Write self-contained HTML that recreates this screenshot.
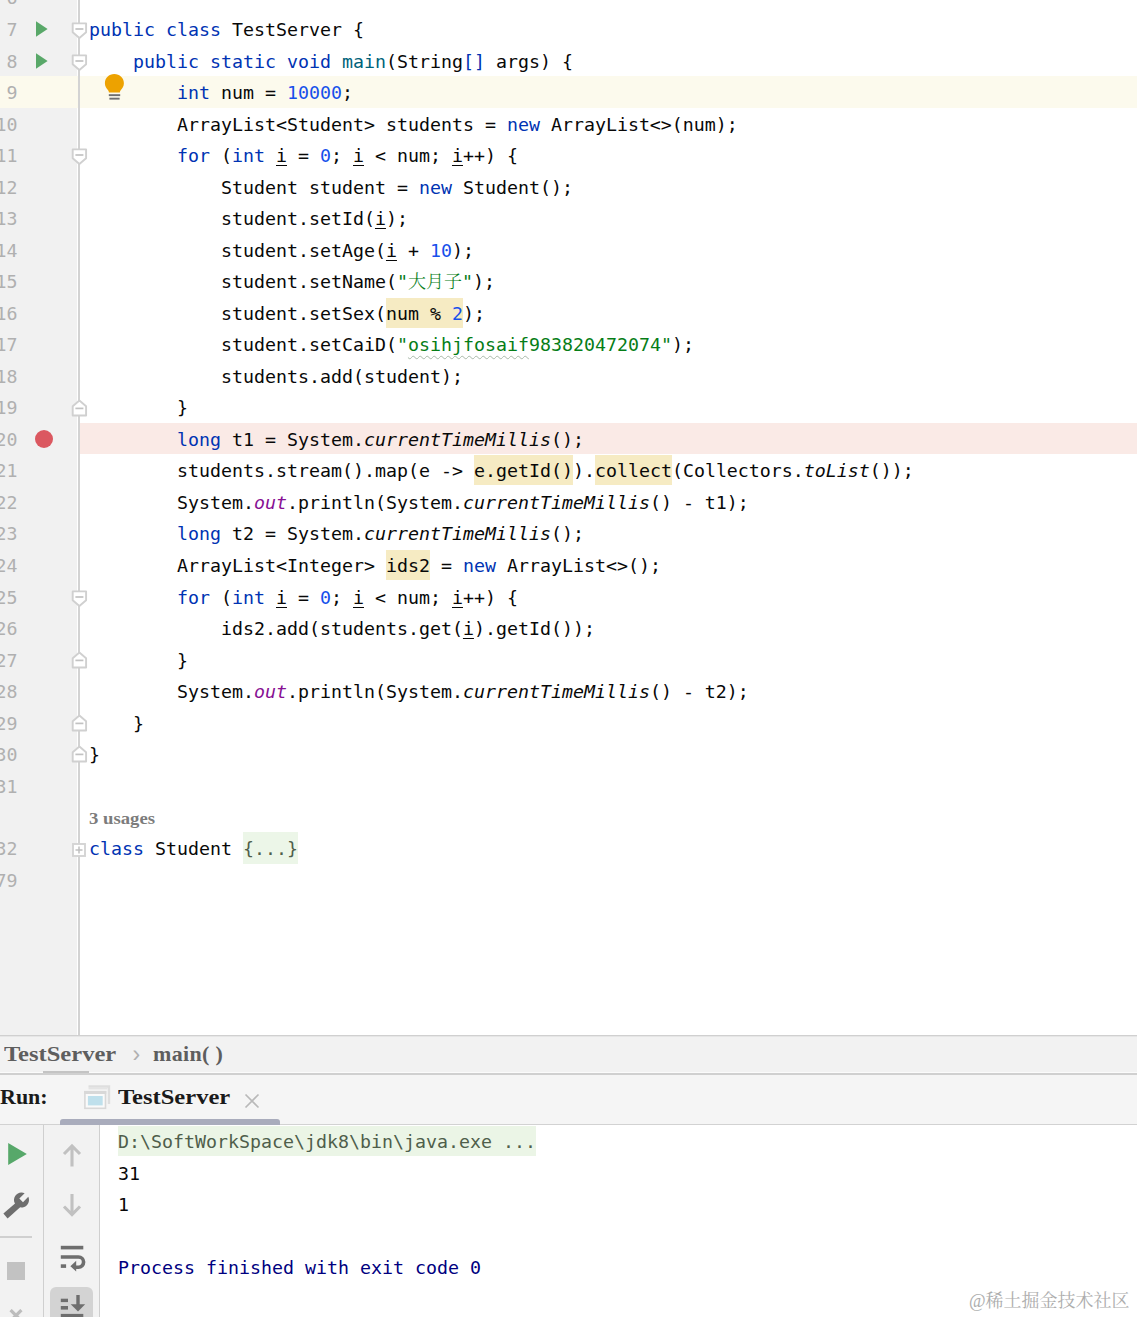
<!DOCTYPE html>
<html lang="en"><head><meta charset="utf-8"><title>TestServer</title>
<style>
*{box-sizing:border-box}
html,body{margin:0;padding:0}
body{width:1137px;height:1317px;overflow:hidden;background:#fff;position:relative;font-family:"DejaVu Sans Mono","Liberation Mono","Noto Sans CJK SC",monospace}
#ed{position:absolute;left:0;top:0;width:1137px;height:1035px;overflow:hidden;background:#fff}
#ed:before{content:"";position:absolute;left:0;top:0;width:77px;height:1035px;background:#f1f1f1}
.gline{position:absolute;left:78px;top:0;width:2px;height:1035px;background:#d3d3d3}
.cur{position:absolute;left:79px;width:1058px;height:32px;background:#fcfaed}
.curg{position:absolute;left:0;width:78px;height:32px;background:#fcfaed}
.bp{position:absolute;left:79.5px;width:1058px;height:30.5px;background:#faeae6}
.ln{position:absolute;left:-40.5px;width:58px;text-align:right;height:32px;line-height:32px;font-size:18.27px;color:#b0b0b0;white-space:pre}
.cl{position:absolute;height:32px;line-height:32px;font-size:18.27px;color:#080808;white-space:pre}
.k{color:#0033b3}
.n{color:#1750eb}
.s{color:#067d17}
.m{color:#00627a}
.f{color:#871094;font-style:italic}
.i{font-style:italic}
.u{text-decoration:underline;text-decoration-thickness:1px;text-underline-offset:3px}
.h{background:#f6ebc3;padding:4.6px 0 3.6px}
.w{text-decoration:underline wavy #a9b8a9;text-decoration-thickness:1px;text-underline-offset:4px}
.cj{font-family:"Noto Serif CJK SC","Noto Sans CJK SC",serif;font-size:18px;line-height:0;font-weight:300}
.fold{background:#ecf6e8;color:#4f5e4b;padding:5.6px 0 4.6px}
.usages{position:absolute;left:89px;top:809px;font-family:"Liberation Serif",serif;font-weight:bold;font-size:16px;color:#7c7c7c;line-height:20px;transform:scaleX(1.17);transform-origin:0 50%;white-space:pre}
.ic{position:absolute;display:block}
.bpdot{position:absolute;left:35px;width:18px;height:18px;border-radius:50%;background:#db5860}
/* bottom */
#bc{position:absolute;left:0;top:1035px;width:1137px;height:38px;background:#f2f2f2;border-top:1px solid #d0d0d0;border-bottom:1px solid #fbfbfb;box-shadow:inset 0 1px 0 #e6e6e6;font-family:"Liberation Serif",serif;font-weight:bold;font-size:22px;color:#5e5e5e}
#bc span{position:absolute;top:6px;line-height:24px;white-space:pre}
.sx{transform:scaleX(1.115);transform-origin:0 50%}
.bcu{position:absolute;left:43px;top:35px;width:46px;height:2px;background:#c4c4c4}
#run{position:absolute;left:0;top:1073px;width:1137px;height:52px;background:#f5f5f5;border-top:2px solid #d0d0d0;border-bottom:1px solid #d2d2d2;font-family:"Liberation Serif",serif;font-weight:bold;font-size:22px;color:#1a1a1a}
#run span{position:absolute;line-height:24px;white-space:pre}
#tabline{position:absolute;left:60px;top:1119px;width:220px;height:5.5px;background:#a9acbc;border-radius:3px 3px 0 0}
#con{position:absolute;left:0;top:1125px;width:1137px;height:192px;background:#fff;overflow:hidden}
.tb1{position:absolute;left:0;top:0;width:44px;height:192px;background:#f2f2f2;border-right:1.5px solid #cfcfcf}
.tb2{position:absolute;left:44px;top:0;width:55.5px;height:192px;background:#f2f2f2;border-right:1.5px solid #cfcfcf}
.sep{position:absolute;left:0;top:111px;width:32px;height:1.5px;background:#d0d0d0}
.stop{position:absolute;left:7px;top:137px;width:18px;height:18px;background:#c2c2c2}
.selbtn{position:absolute;left:50px;top:162px;width:43px;height:40px;border-radius:6px;background:#d3d3d3}
.co{position:absolute;left:118px;height:32px;line-height:32px;font-size:18.27px;white-space:pre;color:#080808}
.wm{position:absolute;right:7.5px;top:1289px;font-family:"Liberation Serif","Noto Serif CJK SC",serif;font-size:18px;color:#adadad;line-height:24px;white-space:pre}

</style></head>
<body>
<div id="ed">
<div class="cur" style="top:76.00px"></div>
<div class="curg" style="top:76.00px"></div>
<div class="bp" style="top:423.20px"></div>
<div class="gline"></div>
<div class="ln" style="top:-18.00px">6</div>
<div class="ln" style="top:14.00px">7</div>
<div class="ln" style="top:46.00px">8</div>
<div class="ln" style="top:77.00px">9</div>
<div class="ln" style="top:109.00px">10</div>
<div class="ln" style="top:140.00px">11</div>
<div class="ln" style="top:172.00px">12</div>
<div class="ln" style="top:203.00px">13</div>
<div class="ln" style="top:235.00px">14</div>
<div class="ln" style="top:266.00px">15</div>
<div class="ln" style="top:298.00px">16</div>
<div class="ln" style="top:329.00px">17</div>
<div class="ln" style="top:361.00px">18</div>
<div class="ln" style="top:392.00px">19</div>
<div class="ln" style="top:424.00px">20</div>
<div class="ln" style="top:455.00px">21</div>
<div class="ln" style="top:487.00px">22</div>
<div class="ln" style="top:518.00px">23</div>
<div class="ln" style="top:550.00px">24</div>
<div class="ln" style="top:582.00px">25</div>
<div class="ln" style="top:613.00px">26</div>
<div class="ln" style="top:645.00px">27</div>
<div class="ln" style="top:676.00px">28</div>
<div class="ln" style="top:708.00px">29</div>
<div class="ln" style="top:739.00px">30</div>
<div class="ln" style="top:771.00px">31</div>
<div class="ln" style="top:833.00px">32</div>
<div class="ln" style="top:865.00px">79</div>
<div class="cl" style="top:14.00px;left:89.00px"><span class="k">public class</span> TestServer {</div>
<div class="cl" style="top:46.00px;left:133.00px"><span class="k">public static void</span> <span class="m">main</span>(String<span class="k">[]</span> args) {</div>
<div class="cl" style="top:77.00px;left:177.00px"><span class="k">int</span> num = <span class="n">10000</span>;</div>
<div class="cl" style="top:109.00px;left:177.00px">ArrayList&lt;Student&gt; students = <span class="k">new</span> ArrayList&lt;&gt;(num);</div>
<div class="cl" style="top:140.00px;left:177.00px"><span class="k">for</span> (<span class="k">int</span> <span class="u">i</span> = <span class="n">0</span>; <span class="u">i</span> &lt; num; <span class="u">i</span>++) {</div>
<div class="cl" style="top:172.00px;left:221.00px">Student student = <span class="k">new</span> Student();</div>
<div class="cl" style="top:203.00px;left:221.00px">student.setId(<span class="u">i</span>);</div>
<div class="cl" style="top:235.00px;left:221.00px">student.setAge(<span class="u">i</span> + <span class="n">10</span>);</div>
<div class="cl" style="top:266.00px;left:221.00px">student.setName(<span class="s">"</span><span class="s cj">大月子</span><span class="s">"</span>);</div>
<div class="cl" style="top:298.00px;left:221.00px">student.setSex(<span class="h">num % <span class="n">2</span></span>);</div>
<div class="cl" style="top:329.00px;left:221.00px">student.setCaiD(<span class="s">"</span><span class="s w">osihjfosaif</span><span class="s">983820472074"</span>);</div>
<div class="cl" style="top:361.00px;left:221.00px">students.add(student);</div>
<div class="cl" style="top:392.00px;left:177.00px">}</div>
<div class="cl" style="top:424.00px;left:177.00px"><span class="k">long</span> t1 = System.<span class="i">currentTimeMillis</span>();</div>
<div class="cl" style="top:455.00px;left:177.00px">students.stream().map(e -&gt; <span class="h">e.getId()</span>).<span class="h">collect</span>(Collectors.<span class="i">toList</span>());</div>
<div class="cl" style="top:487.00px;left:177.00px">System.<span class="f">out</span>.println(System.<span class="i">currentTimeMillis</span>() - t1);</div>
<div class="cl" style="top:518.00px;left:177.00px"><span class="k">long</span> t2 = System.<span class="i">currentTimeMillis</span>();</div>
<div class="cl" style="top:550.00px;left:177.00px">ArrayList&lt;Integer&gt; <span class="h">ids2</span> = <span class="k">new</span> ArrayList&lt;&gt;();</div>
<div class="cl" style="top:582.00px;left:177.00px"><span class="k">for</span> (<span class="k">int</span> <span class="u">i</span> = <span class="n">0</span>; <span class="u">i</span> &lt; num; <span class="u">i</span>++) {</div>
<div class="cl" style="top:613.00px;left:221.00px">ids2.add(students.get(<span class="u">i</span>).getId());</div>
<div class="cl" style="top:645.00px;left:177.00px">}</div>
<div class="cl" style="top:676.00px;left:177.00px">System.<span class="f">out</span>.println(System.<span class="i">currentTimeMillis</span>() - t2);</div>
<div class="cl" style="top:708.00px;left:133.00px">}</div>
<div class="cl" style="top:739.00px;left:89.00px">}</div>
<div class="cl" style="top:771.00px;left:89.00px"></div>
<div class="cl" style="top:833.00px;left:89.00px"><span class="k">class</span> Student <span class="fold">{...}</span></div>
<div class="usages">3 usages</div>
<svg class="ic" style="left:35px;top:20.20px" width="14" height="18" viewBox="0 0 14 18"><path d="M1 1.2 L12.6 9 L1 16.8 Z" fill="#59a869"/></svg>
<svg class="ic" style="left:35px;top:51.73px" width="14" height="18" viewBox="0 0 14 18"><path d="M1 1.2 L12.6 9 L1 16.8 Z" fill="#59a869"/></svg>
<svg class="ic" style="left:70.8px;top:22.20px" width="17" height="18" viewBox="0 0 17 18"><path d="M1.7 1.4 H15.1 V10.2 L8.4 16 L1.7 10.2 Z" fill="#fff" stroke="#d0d0d0" stroke-width="1.9" stroke-linejoin="round"/><path d="M4.4 7 H12.4" stroke="#c2c2c2" stroke-width="1.7"/></svg>
<svg class="ic" style="left:70.8px;top:53.73px" width="17" height="18" viewBox="0 0 17 18"><path d="M1.7 1.4 H15.1 V10.2 L8.4 16 L1.7 10.2 Z" fill="#fff" stroke="#d0d0d0" stroke-width="1.9" stroke-linejoin="round"/><path d="M4.4 7 H12.4" stroke="#c2c2c2" stroke-width="1.7"/></svg>
<svg class="ic" style="left:70.8px;top:148.32px" width="17" height="18" viewBox="0 0 17 18"><path d="M1.7 1.4 H15.1 V10.2 L8.4 16 L1.7 10.2 Z" fill="#fff" stroke="#d0d0d0" stroke-width="1.9" stroke-linejoin="round"/><path d="M4.4 7 H12.4" stroke="#c2c2c2" stroke-width="1.7"/></svg>
<svg class="ic" style="left:70.8px;top:589.74px" width="17" height="18" viewBox="0 0 17 18"><path d="M1.7 1.4 H15.1 V10.2 L8.4 16 L1.7 10.2 Z" fill="#fff" stroke="#d0d0d0" stroke-width="1.9" stroke-linejoin="round"/><path d="M4.4 7 H12.4" stroke="#c2c2c2" stroke-width="1.7"/></svg>
<svg class="ic" style="left:70.8px;top:398.56px" width="17" height="18" viewBox="0 0 17 18"><path d="M1.7 16.5 H15.1 V7.2 L8.4 1.6 L1.7 7.2 Z" fill="#fff" stroke="#d0d0d0" stroke-width="1.9" stroke-linejoin="round"/><path d="M4.4 9.4 H12.4" stroke="#c2c2c2" stroke-width="1.7"/></svg>
<svg class="ic" style="left:70.8px;top:650.80px" width="17" height="18" viewBox="0 0 17 18"><path d="M1.7 16.5 H15.1 V7.2 L8.4 1.6 L1.7 7.2 Z" fill="#fff" stroke="#d0d0d0" stroke-width="1.9" stroke-linejoin="round"/><path d="M4.4 9.4 H12.4" stroke="#c2c2c2" stroke-width="1.7"/></svg>
<svg class="ic" style="left:70.8px;top:713.86px" width="17" height="18" viewBox="0 0 17 18"><path d="M1.7 16.5 H15.1 V7.2 L8.4 1.6 L1.7 7.2 Z" fill="#fff" stroke="#d0d0d0" stroke-width="1.9" stroke-linejoin="round"/><path d="M4.4 9.4 H12.4" stroke="#c2c2c2" stroke-width="1.7"/></svg>
<svg class="ic" style="left:70.8px;top:745.39px" width="17" height="18" viewBox="0 0 17 18"><path d="M1.7 16.5 H15.1 V7.2 L8.4 1.6 L1.7 7.2 Z" fill="#fff" stroke="#d0d0d0" stroke-width="1.9" stroke-linejoin="round"/><path d="M4.4 9.4 H12.4" stroke="#c2c2c2" stroke-width="1.7"/></svg>
<svg class="ic" style="left:72px;top:842.80px" width="14" height="14" viewBox="0 0 14 14"><rect x="1" y="1" width="12" height="12" fill="#fff" stroke="#d4d4d4" stroke-width="1.9"/><path d="M3.5 7 H10.5 M7 3.5 V10.5" stroke="#c0c0c0" stroke-width="1.5"/></svg>
<div class="bpdot" style="top:430.09px"></div>
<svg class="ic" style="left:104px;top:73px" width="21" height="28" viewBox="0 0 21 28"><path d="M10.3 1 C4.9 1 0.9 5 0.9 10.2 C0.9 13.4 2.6 15.4 3.9 17 C4.7 18 4.9 18.8 4.9 19.6 H15.9 C15.9 18.8 16.1 18 16.9 17 C18.2 15.4 19.9 13.4 19.9 10.2 C19.9 5 15.7 1 10.3 1 Z" fill="#eda200"/><rect x="4.8" y="21.2" width="11.4" height="1.9" fill="#6e6e6e"/><rect x="5.4" y="24.7" width="10.2" height="1.9" fill="#6e6e6e"/></svg>
</div>
<div id="bc"><span class="sx" style="left:4px">TestServer</span><span style="left:132.5px;top:6px;color:#b0b0b0;font-weight:normal;font-size:23px;font-family:'Liberation Sans',sans-serif">›</span><span style="left:153px;letter-spacing:.35px">main( )</span><i class="bcu"></i></div>
<div id="run"><span style="left:0;top:10px">Run:</span><span class="sx" style="left:118px;top:10px">TestServer</span>
<svg class="ic" style="left:83px;top:9px" width="28" height="26" viewBox="0 0 28 26">
<path d="M5.5 2.5 H26 V20" fill="none" stroke="#dedede" stroke-width="2.4"/>
<path d="M5.5 4.6 H24.5" fill="none" stroke="#e4e4e4" stroke-width="1.6"/>
<rect x="1.9" y="7.7" width="20.6" height="16.6" fill="#fafafa" stroke="#d8d8d8" stroke-width="1.6"/>
<rect x="1.1" y="7" width="22.2" height="3" fill="#d8d8d8"/>
<rect x="4.9" y="12" width="14.8" height="9.4" fill="#bfe0ec"/>
</svg>
<svg class="ic" style="left:244px;top:18px" width="16" height="16" viewBox="0 0 16 16"><path d="M1.5 1.5 L14.5 14.5 M14.5 1.5 L1.5 14.5" stroke="#b9b9b9" stroke-width="1.7" fill="none"/></svg>
</div>
<div id="tabline"></div>
<div id="con">
<div class="tb1"></div><div class="tb2"></div>
<div class="sep"></div>
<svg class="ic" style="left:7px;top:17px" width="22" height="24" viewBox="0 0 22 24"><path d="M1.2 1 L19.8 12 L1.2 23 Z" fill="#57a86a"/></svg>
<svg class="ic" style="left:0px;top:64px" width="34" height="32" viewBox="0 0 34 32">
<path d="M3.4 24.6 L16.2 13.4 L20.4 18 L7.6 29.4 Z" fill="#6e6e6e"/>
<path d="M24.63 4.19 A7.5 7.5 0 1 0 28.31 7.87 L22.99 13.19 L19.31 9.51 Z" fill="#6e6e6e"/>
</svg>
<div class="stop"></div>
<svg class="ic" style="left:8px;top:184px" width="16" height="8" viewBox="0 0 16 9"><path d="M1.9 1.2 L14.1 13.4 M14.1 1.2 L1.9 13.4" stroke="#bdbdbd" stroke-width="3.6" fill="none"/></svg>
<svg class="ic" style="left:61px;top:17px" width="22" height="26" viewBox="0 0 22 26"><path d="M11 24.5 V4.5 M3 12 L11 4 L19 12" stroke="#c1c1c1" stroke-width="3.1" fill="none"/></svg>
<svg class="ic" style="left:61px;top:67px" width="22" height="26" viewBox="0 0 22 26"><path d="M11 2 V22 M3 14.5 L11 22.5 L19 14.5" stroke="#c1c1c1" stroke-width="3.1" fill="none"/></svg>
<svg class="ic" style="left:59px;top:118px" width="28" height="30" viewBox="0 0 28 30">
<rect x="1.8" y="2.8" width="22.5" height="3.6" fill="#6e6e6e"/>
<path d="M1.8 14 H19.5 A5 5 0 0 1 19.5 24.2 H17" fill="none" stroke="#6e6e6e" stroke-width="3.6"/>
<rect x="1.8" y="21.3" width="5.3" height="3.6" fill="#6e6e6e"/>
<path d="M11.4 23.2 L17.2 17.8 V28.6 Z" fill="#6e6e6e"/>
</svg>
<div class="selbtn"></div>
<svg class="ic" style="left:59px;top:168px" width="28" height="24" viewBox="0 0 28 24">
<rect x="1.8" y="5.7" width="7.2" height="3.4" fill="#6e6e6e"/>
<rect x="1.8" y="13" width="7.2" height="3.6" fill="#6e6e6e"/>
<rect x="1.8" y="20.9" width="22.5" height="3.4" fill="#6e6e6e"/>
<rect x="17.3" y="2" width="3.4" height="10" fill="#6e6e6e"/>
<path d="M11.7 11.3 H26.2 L19 18.6 Z" fill="#6e6e6e"/>
</svg>
<div class="co" style="top:1px;padding-top:1px;background:#ebf5e6;color:#4f5e4b;width:418px;height:30px;line-height:30px">D:\SoftWorkSpace\jdk8\bin\java.exe ...</div>
<div class="co" style="top:33px">31</div>
<div class="co" style="top:64px">1</div>
<div class="co" style="top:127px;color:#00007f">Process finished with exit code 0</div>
</div>
<div class="wm">@稀土掘金技术社区</div>

</body></html>
